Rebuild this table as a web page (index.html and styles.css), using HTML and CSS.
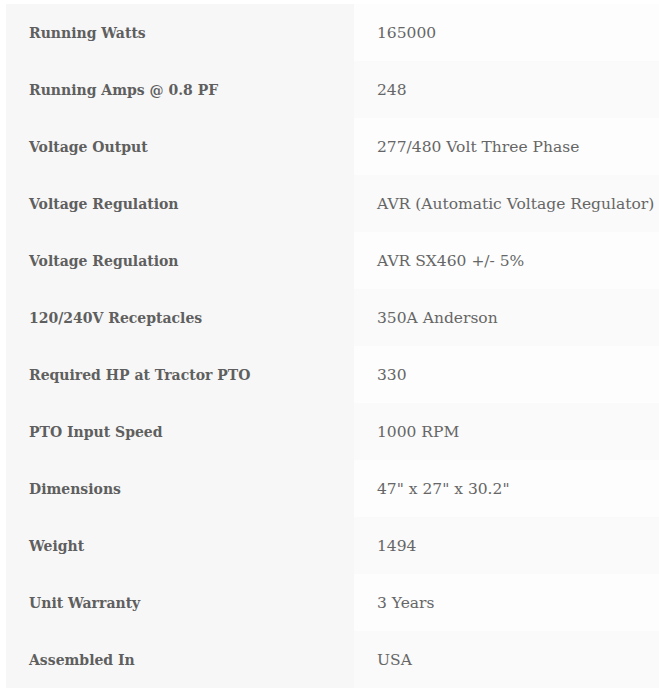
FILE: index.html
```html
<!DOCTYPE html>
<html>
<head>
<meta charset="utf-8">
<link rel="stylesheet" href="styles.css">
</head>
<body>
<table class="specs">
<tbody>
<tr><th>Running Watts</th><td>165000</td></tr>
<tr><th>Running Amps @ 0.8 PF</th><td>248</td></tr>
<tr><th>Voltage Output</th><td>277/480 Volt Three Phase</td></tr>
<tr><th>Voltage Regulation</th><td>AVR (Automatic Voltage Regulator)</td></tr>
<tr><th>Voltage Regulation</th><td>AVR SX460 +/- 5%</td></tr>
<tr><th>120/240V Receptacles</th><td>350A Anderson</td></tr>
<tr><th>Required HP at Tractor PTO</th><td>330</td></tr>
<tr><th>PTO Input Speed</th><td>1000 RPM</td></tr>
<tr><th>Dimensions</th><td>47" x 27" x 30.2"</td></tr>
<tr><th>Weight</th><td>1494</td></tr>
<tr><th>Unit Warranty</th><td>3 Years</td></tr>
<tr><th>Assembled In</th><td>USA</td></tr>
</tbody>
</table>
</body>
</html>
```
FILE: styles.css
```css
html, body {
  margin: 0;
  padding: 0;
  background: #ffffff;
  overflow: hidden;
}
body {
  padding: 4px 0 0 6px;
  font-family: "DejaVu Serif", serif;
  color: #666666;
}
.specs {
  border-collapse: collapse;
  width: 653px;
  table-layout: fixed;
}
.specs tr {
  height: 57px;
}
.specs th {
  width: 348px;
  box-sizing: border-box;
  padding: 0 0 0 23px;
  text-align: left;
  font-weight: bold;
  font-size: 14px;
  color: #5f5f5f;
  background: #f7f7f7;
}
.specs td {
  padding: 0 0 0 23px;
  font-size: 15.5px;
  background: #fdfdfd;
  white-space: nowrap;
  overflow: visible;
}
.specs tr:nth-child(even) td {
  background: #fafafa;
}
```
